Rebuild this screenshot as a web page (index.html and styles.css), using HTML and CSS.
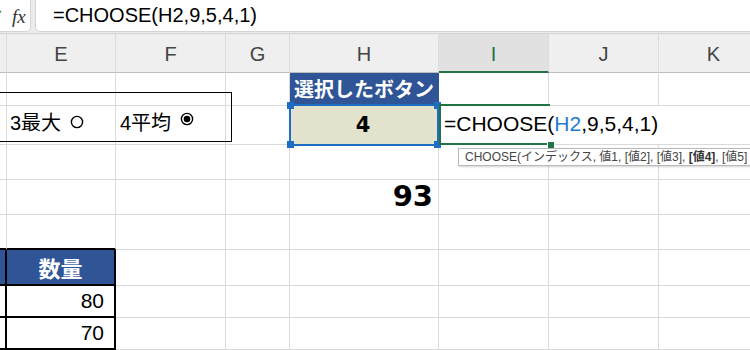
FILE: index.html
```
<!DOCTYPE html>
<html lang="ja">
<head>
<meta charset="utf-8">
<title>CHOOSE</title>
<link rel="stylesheet" href="styles.css">
</head>
<body>
<div class="app">
  <div class="fbar">
    <div class="fxbox">
      <svg class="check" width="14" height="12" viewBox="0 0 14 12"><path d="M1 6 L5 10 L13 1" fill="none" stroke="#3a9a3a" stroke-width="1.6"/></svg>
      <span class="fx">fx</span>
    </div>
    <div class="formula">=CHOOSE(H2,9,5,4,1)</div>
  </div>
  <div class="sheet">
    <div class="grid">
      <div class="ch"></div><div class="ch">E</div><div class="ch">F</div><div class="ch">G</div><div class="ch">H</div><div class="ch active">I</div><div class="ch">J</div><div class="ch">K</div>

      <div class="c"></div><div class="c"></div><div class="c"></div><div class="c"></div><div class="c hd">選択したボタン</div><div class="c"></div><div class="c"></div><div class="c"></div>

      <div class="c"></div><div class="c"></div><div class="c"></div><div class="c"></div><div class="c val">4</div><div class="c"></div><div class="c"></div><div class="c"></div>

      <div class="c"></div><div class="c"></div><div class="c"></div><div class="c"></div><div class="c"></div><div class="c"></div><div class="c"></div><div class="c"></div>

      <div class="c"></div><div class="c"></div><div class="c"></div><div class="c"></div><div class="c big">93</div><div class="c"></div><div class="c"></div><div class="c"></div>

      <div class="c bb"></div><div class="c bb"></div><div class="c"></div><div class="c"></div><div class="c"></div><div class="c"></div><div class="c"></div><div class="c"></div>

      <div class="c th tb"></div><div class="c th tb">数量</div><div class="c"></div><div class="c"></div><div class="c"></div><div class="c"></div><div class="c"></div><div class="c"></div>

      <div class="c tb"></div><div class="c tb num">80</div><div class="c"></div><div class="c"></div><div class="c"></div><div class="c"></div><div class="c"></div><div class="c"></div>

      <div class="c tb"></div><div class="c tb num">70</div><div class="c"></div><div class="c"></div><div class="c"></div><div class="c"></div><div class="c"></div><div class="c"></div>
    </div>

    <div class="groupbox">
      <div class="opt">
        <span class="lbl">3最大</span>
        <svg class="radio r1" width="14" height="14" viewBox="0 0 14 14"><circle cx="7" cy="7" r="5.6" fill="#fff" stroke="#000" stroke-width="1.4"/></svg>
      </div>
      <div class="opt">
        <span class="lbl">4平均</span>
        <svg class="radio r2" width="14" height="14" viewBox="0 0 14 14"><circle cx="7" cy="7" r="5.6" fill="#fff" stroke="#000" stroke-width="1.4"/><circle cx="7" cy="7" r="3.3" fill="#000"/></svg>
      </div>
    </div>

    <div class="refsel">
      <span class="hdl tl"></span><span class="hdl tr"></span><span class="hdl bl"></span><span class="hdl br"></span>
    </div>

    <div class="editor">=CHOOSE(<span class="ref">H2</span>,9,5,4,1)</div>

    <div class="tip">CHOOSE(インデックス, 値1, [値2], [値3], <b>[値4]</b>, [値5]</div>
  </div>
</div>
</body>
</html>
```
FILE: styles.css
```
html, body {
  margin: 0;
  padding: 0;
  background: #fff;
}
body {
  font-family: "Liberation Sans", "Noto Sans CJK JP", sans-serif;
  color: #000;
}
.app {
  width: 750px;
  height: 350px;
  overflow: hidden;
  position: relative;
}

/* formula bar */
.fbar {
  display: flex;
  gap: 4px;
  height: 34px;
  box-sizing: border-box;
  background: #ececec;
  border-bottom: 1px solid #d2d2d2;
  padding-bottom: 1px;
}
.fxbox {
  width: 31px;
  flex: none;
  background: #fff;
  border: 1px solid #d4d4d4;
  border-top: 0;
  border-left: 0;
  border-radius: 0 0 5px 0;
  display: flex;
  align-items: center;
  box-sizing: border-box;
}
.check {
  margin-left: -12px;
  flex: none;
}
.fx {
  margin-left: 10px;
  font-family: "Liberation Serif", serif;
  font-style: italic;
  font-size: 19px;
  color: #333;
  line-height: 1;
  margin-top: 1px;
}
.formula {
  flex: 1;
  background: #fff;
  border: 1px solid #d4d4d4;
  border-top: 0;
  border-right: 0;
  border-radius: 0 0 0 5px;
  font-size: 20px;
  line-height: 31px;
  padding-left: 17px;
  white-space: nowrap;
}

/* sheet */
.sheet {
  position: relative;
}
.grid {
  display: grid;
  grid-template-columns: 7px 109px 110px 64px 149px 110px 110px 110px;
  grid-template-rows: 39px 33px 39px 35px 35px 35px 36px 32px 32px;
  width: 769px;
}
.ch {
  background: #efefef;
  border-right: 1px solid #dcdcdc;
  border-bottom: 1px solid #bdbdbd;
  box-sizing: border-box;
  display: flex;
  align-items: center;
  justify-content: center;
  font-size: 20px;
  color: #444;
  padding-top: 3px;
}
.ch.active {
  background: #e1e1e1;
  color: #217346;
  border-bottom: 2px solid #217346;
}
.c {
  border-right: 1px solid #dadada;
  border-bottom: 1px solid #dadada;
  box-sizing: border-box;
  display: flex;
  align-items: center;
  white-space: nowrap;
}
.hd {
  background: #2f5597;
  border-color: #2f5597;
  color: #fff;
  font-family: "Noto Sans CJK JP", sans-serif;
  font-weight: bold;
  font-size: 20px;
  justify-content: center;
  line-height: 1;
}
.val {
  background: #e3e2cc;
  justify-content: center;
  font-family: "DejaVu Sans", sans-serif;
  font-weight: bold;
  font-size: 21px;
  padding-right: 2px;
}
.big {
  justify-content: flex-end;
  padding-right: 5px;
  font-family: "DejaVu Sans", sans-serif;
  font-weight: bold;
  font-size: 29px;
  padding-bottom: 3px;
}
.bb {
  border-bottom: 2px solid #000;
}
.tb {
  border-right: 2px solid #000;
  border-bottom: 2px solid #000;
}
.th {
  background: #2f5597;
  color: #fff;
  font-family: "Noto Sans CJK JP", sans-serif;
  font-weight: bold;
  font-size: 22px;
  justify-content: center;
  line-height: 1;
}
.num {
  justify-content: flex-end;
  padding-right: 10px;
  font-size: 21px;
}

/* option group box (form control over the cells) */
.groupbox {
  position: absolute;
  left: -10px;
  top: 58px;
  width: 242px;
  height: 50px;
  box-sizing: border-box;
  border: 1.5px solid #000;
  display: flex;
  padding-left: 19px;
  padding-top: 20px;
}
.opt {
  width: 110px;
  display: flex;
  align-items: flex-start;
  gap: 9px;
}
.lbl {
  font-family: "Liberation Sans", "Noto Sans CJK JP", sans-serif;
  font-size: 20px;
  line-height: 20px;
}
.radio {
  flex: none;
}
.r1 { margin-top: 2px; }
.r2 { margin-top: -1px; }

/* reference highlight around H2 */
.refsel {
  position: absolute;
  left: 289px;
  top: 70px;
  width: 150px;
  height: 42px;
  box-sizing: border-box;
  border: 2px solid #1b6ec2;
}
.hdl {
  position: absolute;
  width: 7px;
  height: 7px;
  background: #1b6ec2;
}
.hdl.tl { left: -4px; top: -4px; }
.hdl.tr { right: -4px; top: -4px; }
.hdl.bl { left: -4px; bottom: -4px; }
.hdl.br { right: -4px; bottom: -4px; }

/* in-cell editor in I2 */
.editor {
  position: absolute;
  left: 439px;
  top: 72px;
  width: 311px;
  height: 38px;
  background: #fff;
  box-sizing: border-box;
  padding-left: 5px;
  font-size: 21px;
  line-height: 36px;
  white-space: nowrap;
}
.editor::before {
  content: "";
  position: absolute;
  left: 0;
  top: -2px;
  width: 111px;
  height: 41px;
  box-sizing: border-box;
  border: 2px solid #217346;
  border-right: 0;
}
.editor::after {
  content: "";
  position: absolute;
  left: 108px;
  top: 35px;
  width: 6px;
  height: 6px;
  background: #217346;
  border: 1px solid #fff;
}
.ref {
  color: #1f7ad0;
}

/* function tooltip */
.tip {
  position: absolute;
  left: 458px;
  top: 114px;
  height: 18px;
  box-sizing: border-box;
  background: #fff;
  border: 1px solid #b9b9b9;
  box-shadow: 1px 1px 2px rgba(0, 0, 0, 0.18);
  padding: 0 6px;
  font-size: 12px;
  line-height: 16px;
  color: #444;
  white-space: nowrap;
}
.tip b {
  color: #333;
}
```
